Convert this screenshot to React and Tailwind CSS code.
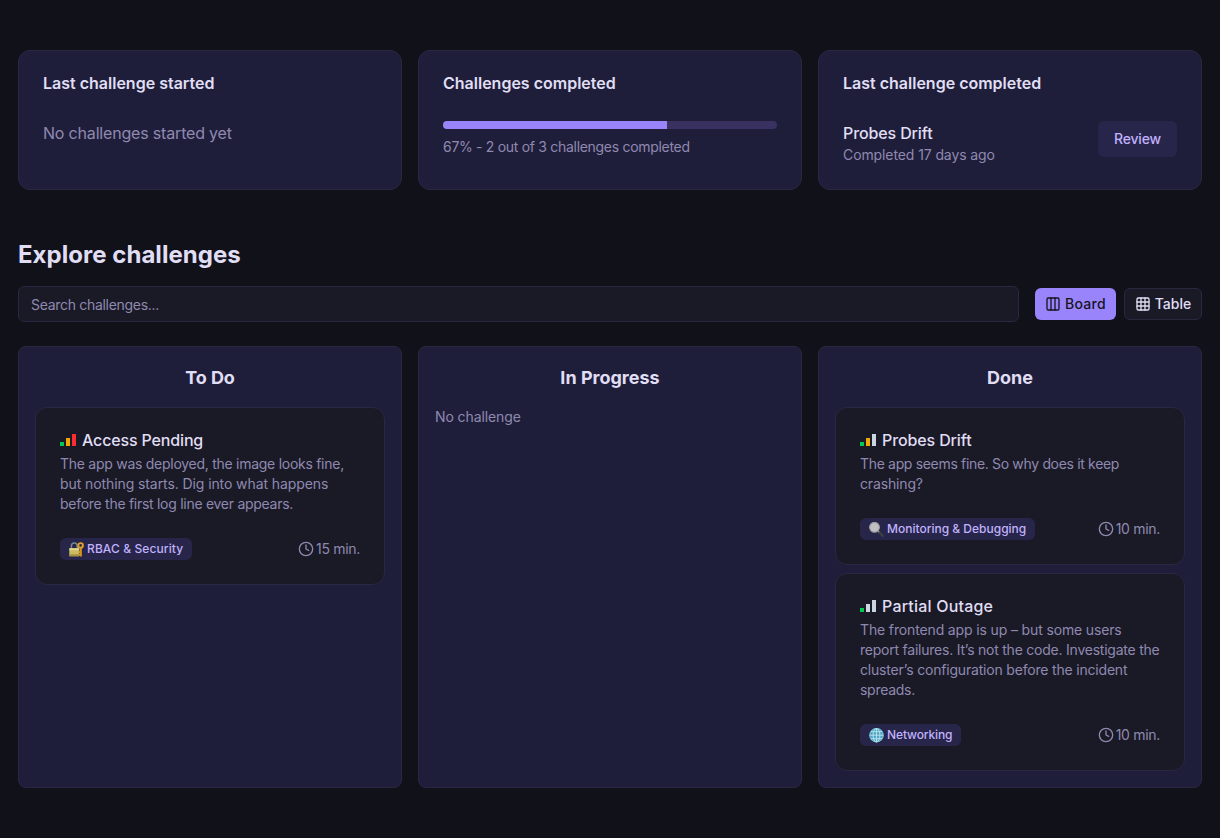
import React from "react";
import { Clock, Columns3, Grid3x3 } from "lucide-react";

function LockIcon() {
  return (
    <svg width="15" height="15" viewBox="0 0 15 15" className="shrink-0">
      <path d="M2.4 7V4a2.9 2.9 0 0 1 5.8 0V7" fill="none" stroke="#77898c" strokeWidth="1.5" />
      <rect x="0.3" y="6.3" width="10" height="8" rx="0.6" fill="#cabb62" />
      <rect x="0.3" y="6.3" width="10" height="2" rx="0.6" fill="#e0d78e" />
      <rect x="0.3" y="12.2" width="10" height="2.1" rx="0.6" fill="#a39243" />
      <circle cx="11.6" cy="3.4" r="2.3" fill="none" stroke="#e2a02c" strokeWidth="1.9" />
      <path d="M11.9 6V14.4M12 10H9.8M12 12.8H10" fill="none" stroke="#d99222" strokeWidth="1.9" />
    </svg>
  );
}

function MagnifierIcon() {
  return (
    <svg width="15" height="15" viewBox="0 0 15 15" className="shrink-0">
      <path d="M9 9l1.8 1.8" stroke="#8d9396" strokeWidth="1.8" />
      <path d="M10.6 10.6l3.1 3.1" stroke="#3b4043" strokeWidth="2.3" strokeLinecap="round" />
      <circle cx="5.5" cy="5.3" r="4.9" fill="#c0c0c3" stroke="#9a9c9e" strokeWidth="1.1" />
    </svg>
  );
}

function GlobeIcon() {
  return (
    <svg width="15" height="15" viewBox="0 0 15 15" className="shrink-0">
      <circle cx="7.5" cy="7.2" r="7.2" fill="#4ba5c6" />
      <g fill="none" stroke="#b9dfe9" strokeWidth="1">
        <circle cx="7.5" cy="7.2" r="6.7" stroke="#78bdd2" />
        <ellipse cx="7.5" cy="7.2" rx="3.4" ry="6.7" />
        <path d="M7.5 0.5v13.4M0.8 7.2h13.4M1.9 3.7h11.2M1.9 10.7h11.2" />
      </g>
    </svg>
  );
}

function Level({ n }) {
  return (
    <svg width="16" height="12" viewBox="0 0 16 12" className="shrink-0" shapeRendering="crispEdges">
      <rect x="0" y="8" width="4" height="4" fill="#00c951" />
      <rect x="6" y="4" width="4" height="8" fill={n > 1 ? "#f0a800" : "#cad5e2"} />
      <rect x="12" y="0" width="4" height="12" fill={n > 2 ? "#fb2c36" : "#cad5e2"} />
    </svg>
  );
}

function Challenge({ level, title, titleClass, lines, icon, tag, tagClass, time }) {
  return (
    <article className="rounded-xl border border-[#2a2742] bg-[#1a1926] p-6">
      <h3 className="flex h-4 items-center gap-1.5 text-base font-medium leading-4 text-[#e0def4]">
        <Level n={level} />
        <span className={titleClass}>{title}</span>
      </h3>
      <p className="mt-1.5 text-sm leading-5 text-[#8f89b0]">
        {lines.map(([text, tracking]) => (
          <span key={text} className={"block whitespace-nowrap " + tracking}>{text}</span>
        ))}
      </p>
      <div className="mt-6 flex h-[22px] items-center justify-between">
        <span className={"flex h-[22px] items-center gap-[3px] rounded-md bg-[#28254a] pl-[9px] text-xs font-medium whitespace-nowrap text-[#c0b2fc] " + tagClass}>
          {icon}
          <span>{tag}</span>
        </span>
        <span className="flex items-center gap-0.5 text-sm whitespace-nowrap text-[#8f89b0]">
          <Clock size={16} strokeWidth={2} />
          <span className="tracking-[-0.3px]">{time}</span>
        </span>
      </div>
    </article>
  );
}

function Column({ title, titleClass, children }) {
  return (
    <section className="h-[442px] rounded-lg border border-[#2a2742] bg-[#1f1e3a] px-4 pt-[17px] pb-4">
      <h2 className="mb-[15px] text-center text-lg font-bold leading-7 text-[#e0def4]">
        <span className={titleClass}>{title}</span>
      </h2>
      <div className="flex flex-col gap-2">{children}</div>
    </section>
  );
}

function Summary({ title, children }) {
  return (
    <section className="h-[140px] rounded-xl border border-[#2a2742] bg-[#1f1e3a] p-6">
      <h2 className="mb-[30px] h-4 text-base font-semibold leading-4 whitespace-nowrap text-[#e0def4]">{title}</h2>
      {children}
    </section>
  );
}

export default function App() {
  return (
    <main className="min-h-screen bg-[#111119] px-[18px] pt-[50px] font-['Inter','Liberation_Sans',sans-serif] text-[#e0def4]">
      <div className="grid grid-cols-3 gap-4">
        <Summary title="Last challenge started">
          <p className="text-base leading-6 tracking-[-0.18px] text-[#8f89b0]">No challenges started yet</p>
        </Summary>
        <Summary title="Challenges completed">
          <div className="h-2 overflow-hidden rounded-full bg-[#393260]">
            <div className="h-full w-[67%] bg-[#9a84fb]" />
          </div>
          <p className="mt-2 text-sm leading-5 tracking-[-0.3px] whitespace-nowrap text-[#8f89b0]">
            67% - 2 out of 3 challenges completed
          </p>
        </Summary>
        <Summary title="Last challenge completed">
          <div className="flex items-start justify-between">
            <div>
              <p className="text-base font-medium leading-6 tracking-[-0.12px]">Probes Drift</p>
              <p className="-mt-0.5 pt-0.5 text-sm leading-5 tracking-[-0.1px] text-[#8f89b0]">Completed 17 days ago</p>
            </div>
            <button className="flex h-9 w-[79px] items-center justify-center rounded-md bg-[#28254a] text-sm font-medium tracking-[-0.15px] text-[#c0b2fc]">
              Review
            </button>
          </div>
        </Summary>
      </div>

      <h1 className="mt-[49px] text-2xl font-bold leading-8 tracking-[0.03px]">Explore challenges</h1>

      <div className="mt-[15px] flex items-center">
        <input
          className="h-9 flex-1 rounded-md border border-[#2a2742] bg-[#1a1926] px-3 text-sm tracking-[-0.3px] placeholder:text-[#8f89b0]"
          placeholder="Search challenges..."
        />
        <button className="ml-4 flex h-8 w-[81px] items-center justify-center gap-1 rounded-md bg-[#9a84fb] text-sm font-medium text-[#15141f]">
          <Columns3 size={16} strokeWidth={2} />
          <span className="tracking-[0.3px]">Board</span>
        </button>
        <button className="ml-2 flex h-8 w-[78px] items-center justify-center gap-1 rounded-md border border-[#2a2742] bg-[#1a1926] text-sm font-medium">
          <Grid3x3 size={16} strokeWidth={2} />
          <span>Table</span>
        </button>
      </div>

      <div className="mt-6 grid grid-cols-3 gap-4">
        <Column title="To Do" titleClass="tracking-[-0.05px]">
          <Challenge
            level={3}
            title="Access Pending"
            titleClass="tracking-[-0.15px]"
            lines={[
              ["The app was deployed, the image looks fine,", "tracking-[-0.27px]"],
              ["but nothing starts. Dig into what happens", "tracking-[-0.09px]"],
              ["before the first log line ever appears.", "tracking-[-0.28px]"],
            ]}
            icon={<LockIcon />}
            tag={<span className="tracking-[0.1px]">RBAC &amp; Security</span>}
            tagClass="w-[132px]"
            time="15 min."
          />
        </Column>
        <Column title="In Progress" titleClass="tracking-normal">
          <p className="text-sm leading-5 tracking-[-0.1px] text-[#8f89b0]">No challenge</p>
        </Column>
        <Column title="Done" titleClass="tracking-[0.05px]">
          <Challenge
            level={2}
            title="Probes Drift"
            titleClass="tracking-[-0.12px]"
            lines={[
              ["The app seems fine. So why does it keep", "tracking-[-0.33px]"],
              ["crashing?", "tracking-[-0.15px]"],
            ]}
            icon={<MagnifierIcon />}
            tag="Monitoring & Debugging"
            tagClass="w-[175px]"
            time="10 min."
          />
          <Challenge
            level={1}
            title="Partial Outage"
            titleClass="tracking-[0.2px]"
            lines={[
              ["The frontend app is up – but some users", "tracking-[-0.14px]"],
              ["report failures. It’s not the code. Investigate the", "tracking-[-0.23px]"],
              ["cluster’s configuration before the incident", "tracking-[-0.19px]"],
              ["spreads.", "tracking-[-0.27px]"],
            ]}
            icon={<GlobeIcon />}
            tag={<span className="tracking-[-0.12px]">Networking</span>}
            tagClass="w-[101px]"
            time="10 min."
          />
        </Column>
      </div>
    </main>
  );
}
